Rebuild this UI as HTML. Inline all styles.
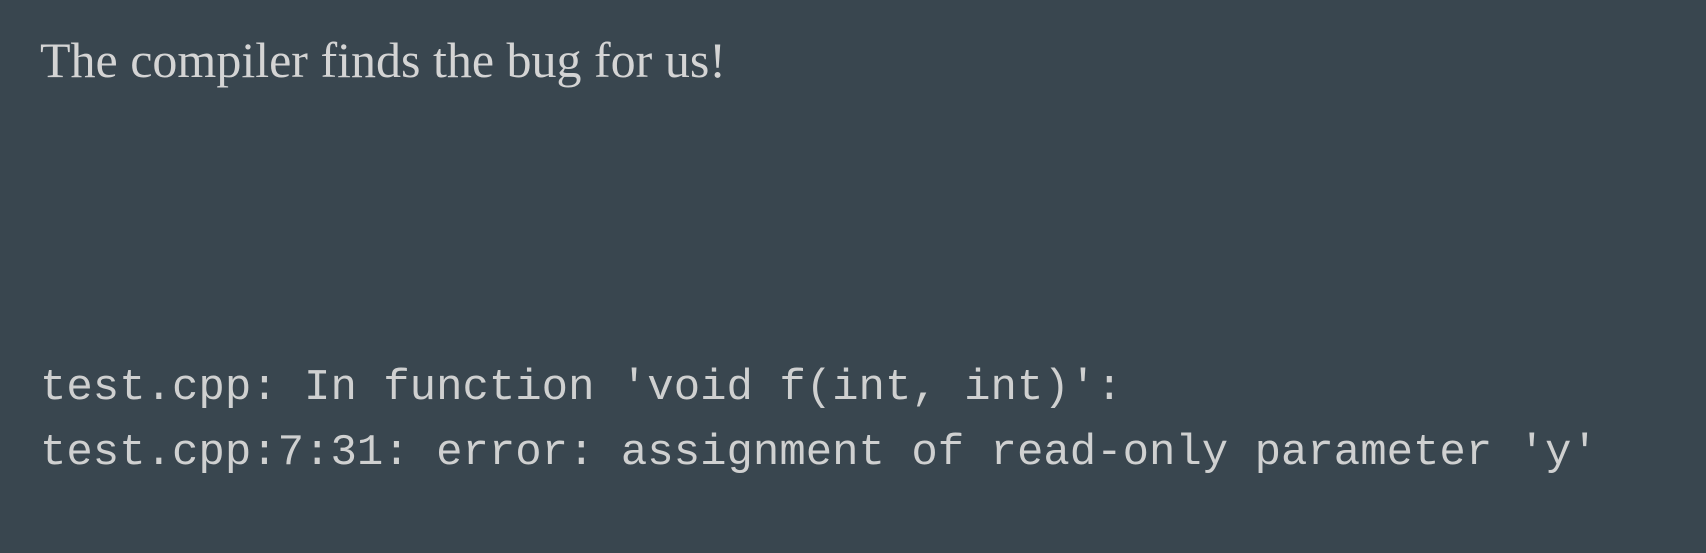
<!DOCTYPE html>
<html><head><style>
html,body{margin:0;padding:0;width:1706px;height:553px;background:#39464f;overflow:hidden}
.t{position:absolute;left:40px;top:30px;font-family:"Liberation Serif",serif;font-size:50px;color:#d4d4d4;line-height:60px;white-space:pre}
.c{position:absolute;left:40px;top:356px;font-family:"Liberation Mono",monospace;font-size:44px;color:#cfd0d0;line-height:65px;white-space:pre}
</style></head><body>
<div class="t">The compiler finds the bug for us!</div>
<div class="c">test.cpp: In function 'void f(int, int)':
test.cpp:7:31: error: assignment of read-only parameter 'y'</div>
</body></html>
